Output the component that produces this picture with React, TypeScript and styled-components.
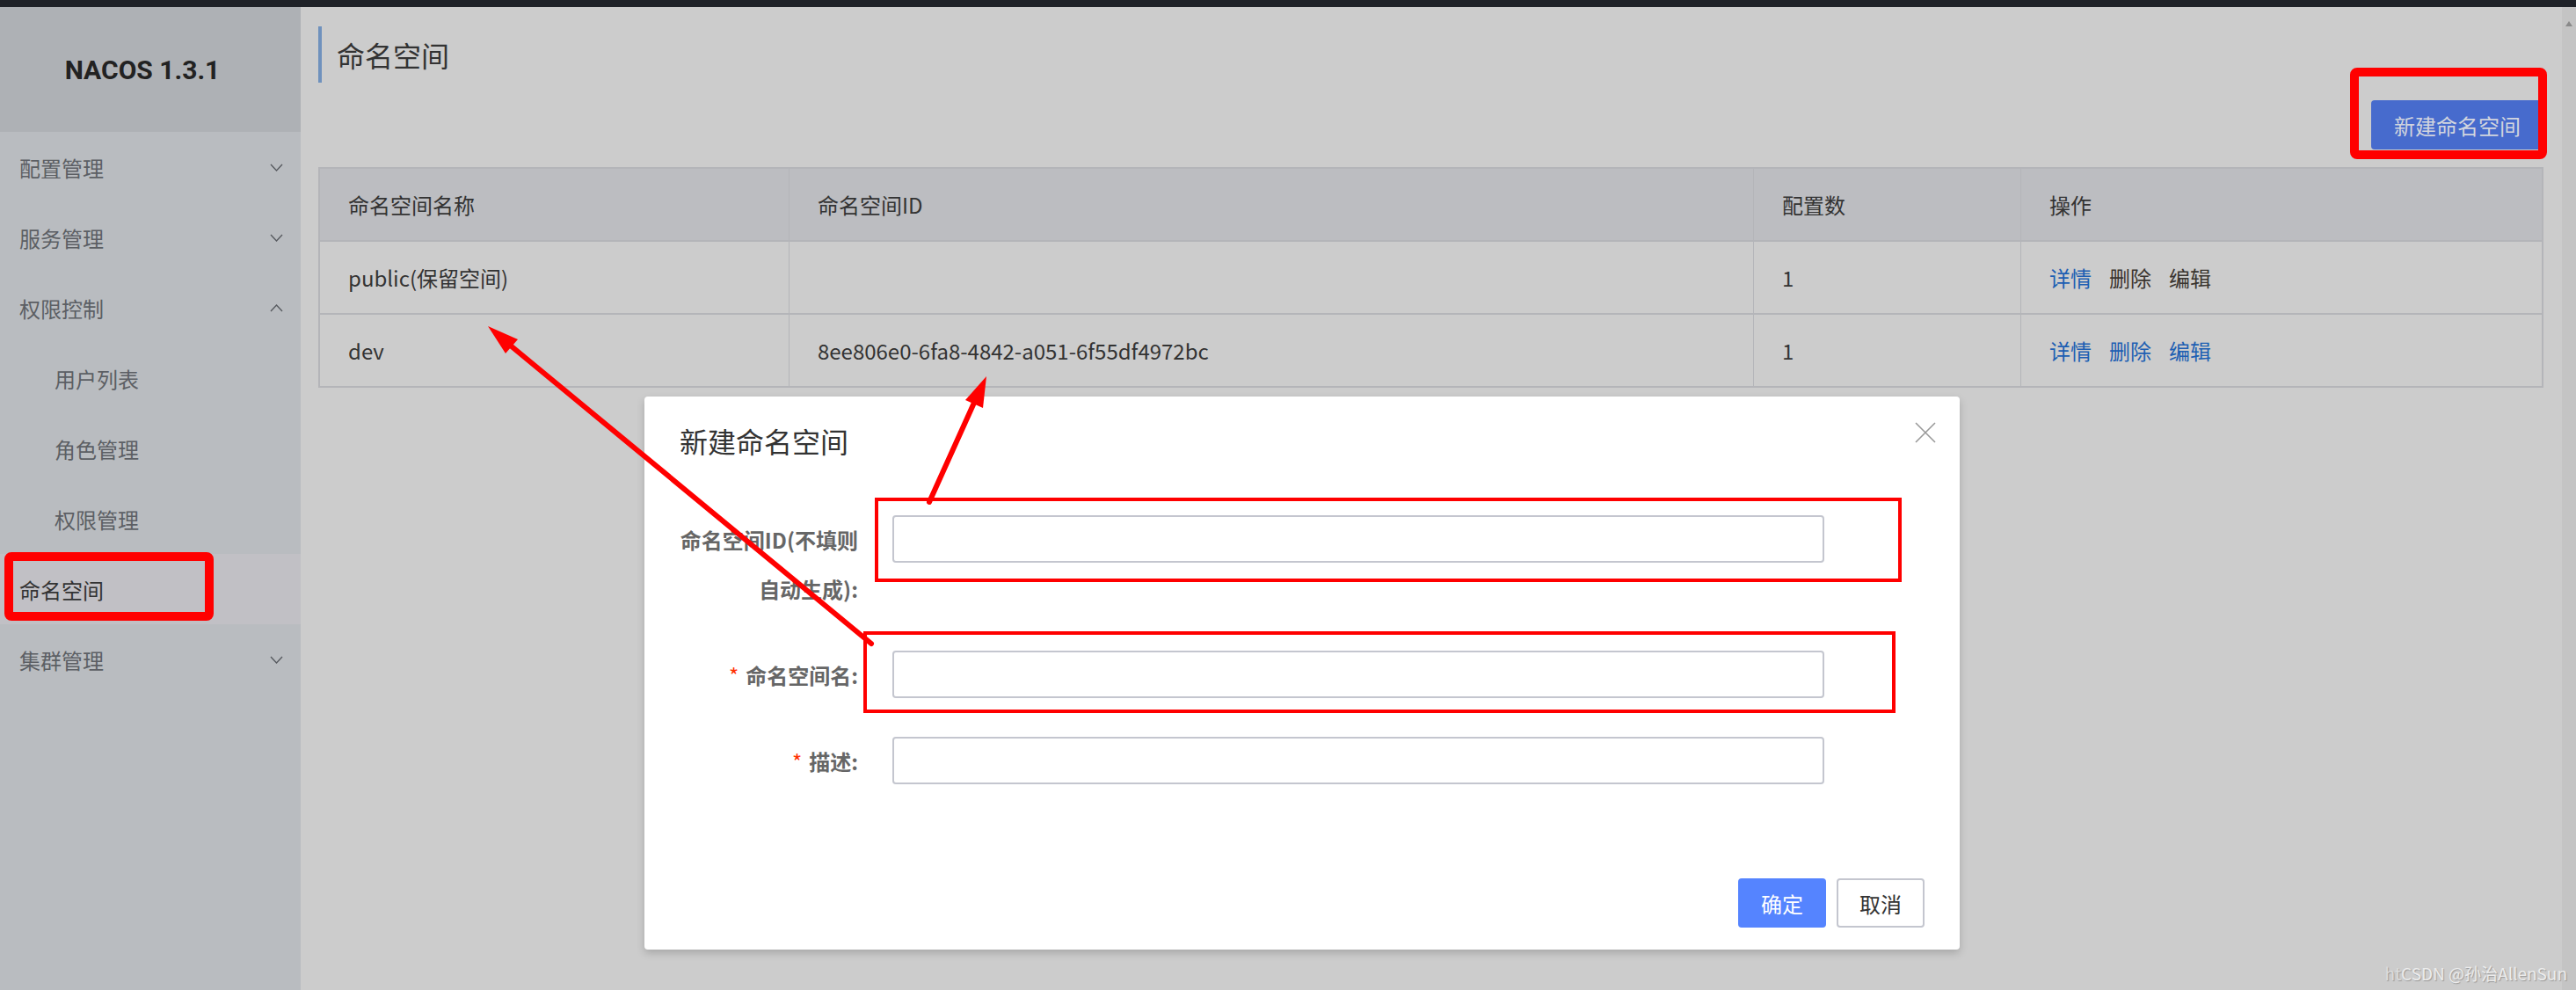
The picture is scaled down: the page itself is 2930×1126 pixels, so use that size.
import React from 'react';
import styled, { createGlobalStyle } from 'styled-components';

const GlobalStyle = createGlobalStyle`
  html, body {
    margin: 0;
    padding: 0;
  }
  body {
    width: 2930px;
    height: 1126px;
    overflow: hidden;
    background: #cccccc;
    font-family: "Noto Sans CJK SC", "Noto Sans", sans-serif;
    color: #333;
  }
  * {
    box-sizing: border-box;
  }
`;

const Page = styled.div`
  position: relative;
  width: 2930px;
  height: 1126px;
  display: flex;
  flex-direction: column;
  overflow: hidden;
`;

const TopBar = styled.div`
  height: 8px;
  flex-shrink: 0;
  background: #1f2228;
`;

const Body = styled.div`
  flex: 1;
  display: flex;
  min-height: 0;
`;

const Sidebar = styled.aside`
  width: 342px;
  flex-shrink: 0;
  background: #b9bcc0;
`;

const Logo = styled.div`
  height: 142px;
  display: flex;
  align-items: center;
  justify-content: center;
  padding-right: 18px;
  background: #aeb1b5;
  font-family: Roboto, "Noto Sans", sans-serif;
  font-size: 30px;
  font-weight: 700;
  color: #222;
`;

const MenuItem = styled.div<{ $sub?: boolean; $active?: boolean }>`
  height: 80px;
  display: flex;
  align-items: center;
  justify-content: space-between;
  padding: 0 20px 0 ${(p) => (p.$sub ? 62 : 22)}px;
  font-size: 24px;
  color: ${(p) => (p.$active ? '#333' : '#5c5f64')};
  background: ${(p) => (p.$active ? '#c1c0c5' : 'transparent')};
`;

const Main = styled.main`
  flex: 1;
  min-width: 0;
  padding: 22px 21px 0 20px;
`;

const PageHeader = styled.div`
  height: 64px;
  display: flex;
  align-items: center;
  padding-left: 17px;
  border-left: 4px solid #6f91bd;
`;

const Title = styled.h1`
  margin: 0;
  font-size: 32px;
  font-weight: 400;
  color: #333;
`;

const Toolbar = styled.div`
  display: flex;
  justify-content: flex-end;
  margin-top: 20px;
`;

const PrimaryButton = styled.button`
  height: 56px;
  padding: 0 26px;
  border: none;
  border-radius: 4px;
  background: #476bcd;
  color: #d2d5de;
  font-family: inherit;
  font-size: 24px;
`;

const Table = styled.div`
  margin-top: 20px;
  border: 2px solid #b4b5b9;
  border-top: none;
`;

const Row = styled.div<{ $head?: boolean }>`
  display: grid;
  grid-template-columns: 533px 1097px 304px 1fr;
  height: 83px;
  border-top: 2px solid #b4b5b9;
  background: ${(p) => (p.$head ? '#bcbdc1' : 'transparent')};
`;

const Cell = styled.div`
  display: flex;
  align-items: center;
  gap: 20px;
  padding-left: 32px;
  font-size: 24px;
  color: #333;
  border-left: 1px solid #b4b5b9;

  &:first-child {
    border-left: none;
  }
`;

const Action = styled.span<{ $muted?: boolean }>`
  color: ${(p) => (p.$muted ? '#3a3530' : '#1d5fb3')};
`;

const Scrollbar = styled.div`
  position: relative;
  width: 16px;
  flex-shrink: 0;
  background: #c4c4c4;

  &::before {
    content: '';
    position: absolute;
    top: 16px;
    left: 4px;
    border-left: 4px solid transparent;
    border-right: 4px solid transparent;
    border-bottom: 6px solid #8a8a8a;
  }
`;

const Dialog = styled.div`
  position: absolute;
  left: 733px;
  top: 451px;
  width: 1496px;
  height: 629px;
  display: flex;
  flex-direction: column;
  padding: 30px 40px 25px;
  background: #fff;
  border-radius: 4px;
  box-shadow: 0 4px 10px rgba(0, 0, 0, 0.18);
`;

const DialogTitle = styled.div`
  font-size: 32px;
  line-height: 40px;
  color: #333;
`;

const Close = styled.button`
  position: absolute;
  top: 29px;
  right: 27px;
  width: 24px;
  height: 24px;
  padding: 0;
  border: none;
  background: none;
`;

const Form = styled.div`
  margin-top: 65px;
`;

const FormItem = styled.div`
  display: flex;
  align-items: flex-start;
  margin-bottom: 42px;
`;

const Label = styled.label`
  width: 203px;
  text-align: right;
  font-size: 24px;
  line-height: 56px;
  font-weight: 700;
  color: #666;
`;

const Required = styled.span`
  margin-right: 8px;
  color: #ff3000;
  font-weight: 400;
`;

const Input = styled.input`
  width: 1060px;
  height: 54px;
  margin-left: 39px;
  border: 2px solid #c4c6cf;
  border-radius: 4px;
  background: #fff;
  font-family: inherit;
  font-size: 24px;
  outline: none;
`;

const Footer = styled.div`
  margin-top: auto;
  display: flex;
  justify-content: flex-end;
  gap: 12px;
`;

const DialogButton = styled.button<{ $primary?: boolean }>`
  height: 56px;
  padding: 0 24px;
  border-radius: 4px;
  border: 2px solid ${(p) => (p.$primary ? '#5584ff' : '#c4c6cf')};
  background: ${(p) => (p.$primary ? '#5584ff' : '#fff')};
  color: ${(p) => (p.$primary ? '#fff' : '#333')};
  font-family: inherit;
  font-size: 24px;
`;

const Annotations = styled.svg`
  position: absolute;
  left: 0;
  top: 0;
  pointer-events: none;
`;

const Watermark = styled.div`
  position: absolute;
  right: 10px;
  bottom: 6px;
  font-size: 19px;
  color: #ececec;
  text-shadow: 1px 1px 1px rgba(0, 0, 0, 0.25);
`;

const Faint = styled.span`
  color: #dcdcdc;
`;

const Chevron = ({ up }: { up?: boolean }) => (
  <svg width="15" height="9" viewBox="0 0 15 9">
    <polyline
      points={up ? '1,8 7.5,1 14,8' : '1,1 7.5,8 14,1'}
      fill="none"
      stroke="#585b60"
      strokeWidth="1.4"
    />
  </svg>
);

const menu = [
  { label: '配置管理', arrow: 'down' },
  { label: '服务管理', arrow: 'down' },
  { label: '权限控制', arrow: 'up' },
  { label: '用户列表', sub: true },
  { label: '角色管理', sub: true },
  { label: '权限管理', sub: true },
  { label: '命名空间', active: true },
  { label: '集群管理', arrow: 'down' },
];

const rows = [
  { name: 'public(保留空间)', id: '', count: 1, muted: true },
  { name: 'dev', id: '8ee806e0-6fa8-4842-a051-6f55df4972bc', count: 1, muted: false },
];

const App: React.FC = () => {
  return (
    <Page>
      <GlobalStyle />
      <TopBar />
      <Body>
        <Sidebar>
          <Logo>NACOS 1.3.1</Logo>
          {menu.map((item) => (
            <MenuItem key={item.label} $sub={item.sub} $active={item.active}>
              <span>{item.label}</span>
              {item.arrow && <Chevron up={item.arrow === 'up'} />}
            </MenuItem>
          ))}
        </Sidebar>
        <Main>
          <PageHeader>
            <Title>命名空间</Title>
          </PageHeader>
          <Toolbar>
            <PrimaryButton>新建命名空间</PrimaryButton>
          </Toolbar>
          <Table>
            <Row $head>
              <Cell>命名空间名称</Cell>
              <Cell>命名空间ID</Cell>
              <Cell>配置数</Cell>
              <Cell>操作</Cell>
            </Row>
            {rows.map((r) => (
              <Row key={r.name}>
                <Cell>{r.name}</Cell>
                <Cell>{r.id}</Cell>
                <Cell>{r.count}</Cell>
                <Cell>
                  <Action>详情</Action>
                  <Action $muted={r.muted}>删除</Action>
                  <Action $muted={r.muted}>编辑</Action>
                </Cell>
              </Row>
            ))}
          </Table>
        </Main>
        <Scrollbar />
      </Body>

      <Dialog>
        <DialogTitle>新建命名空间</DialogTitle>
        <Close>
          <svg width="24" height="24" viewBox="0 0 24 24">
            <path d="M1 1 L23 23 M23 1 L1 23" stroke="#999" strokeWidth="1.6" fill="none" />
          </svg>
        </Close>
        <Form>
          <FormItem>
            <Label>
              命名空间ID(不填则
              <br />
              自动生成):
            </Label>
            <Input />
          </FormItem>
          <FormItem>
            <Label>
              <Required>*</Required>命名空间名:
            </Label>
            <Input />
          </FormItem>
          <FormItem>
            <Label>
              <Required>*</Required>描述:
            </Label>
            <Input />
          </FormItem>
        </Form>
        <Footer>
          <DialogButton $primary>确定</DialogButton>
          <DialogButton>取消</DialogButton>
        </Footer>
      </Dialog>

      <Annotations width="2930" height="1126" viewBox="0 0 2930 1126">
        <g fill="none" stroke="#ff0000">
          <rect x="2678" y="82" width="214" height="94" rx="3" strokeWidth="10" />
          <rect x="10" y="633" width="228" height="68" rx="3" strokeWidth="10" />
          <rect x="997" y="568" width="1164" height="92" strokeWidth="4" />
          <rect x="984" y="720" width="1170" height="89" strokeWidth="4" />
          <line x1="991" y1="732" x2="577" y2="390" strokeWidth="6" strokeLinecap="round" />
          <line x1="1057" y1="571" x2="1108" y2="458" strokeWidth="6" strokeLinecap="round" />
        </g>
        <g fill="#ff0000">
          <polygon points="555,371 575,402 589,386" />
          <polygon points="1122,428 1118,464 1098,455" />
        </g>
      </Annotations>

      <Watermark>
        <Faint>ht</Faint>CSDN @孙治AllenSun
      </Watermark>
    </Page>
  );
};

export default App;
